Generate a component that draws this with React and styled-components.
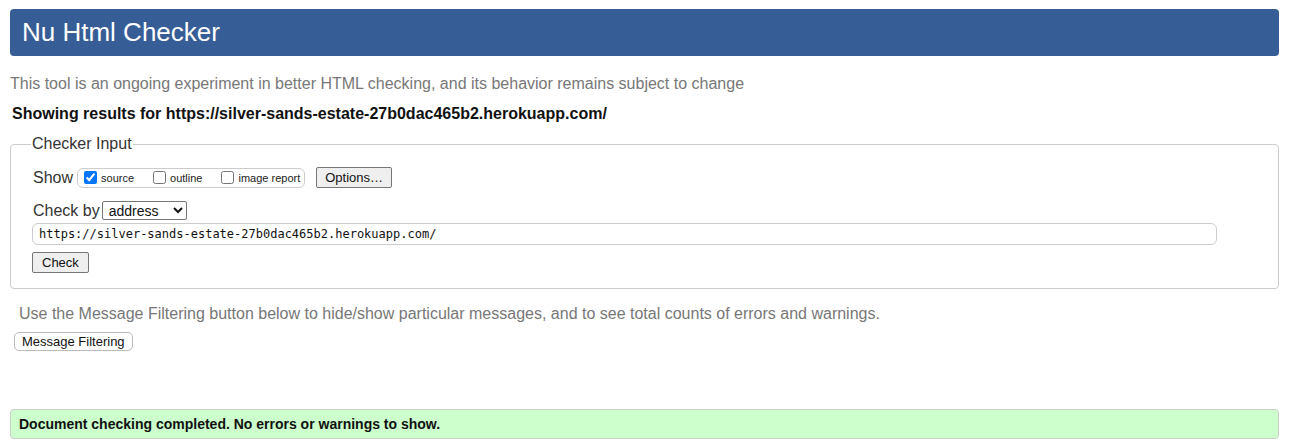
import React from "react";
import styled, { createGlobalStyle } from "styled-components";

const GlobalStyle = createGlobalStyle`
  body {
    margin: 0;
    background: #fff;
    font-family: Arial, "Liberation Sans", sans-serif;
    color: #222;
  }
`;

const Page = styled.div`
  padding: 9px 10px 0;
`;

const Header = styled.h1`
  margin: 0;
  height: 47px;
  background: #365d95;
  border-radius: 4px;
  color: #fff;
  font-weight: normal;
  font-size: 26px;
  line-height: 47px;
  padding-left: 12px;
`;

const Intro = styled.p`
  margin: 19px 0 0;
  font-size: 16px;
  line-height: 18px;
  color: #777;
`;

const Results = styled.p`
  margin: 12px 0 0 2px;
  font-size: 16px;
  line-height: 18px;
  font-weight: bold;
  color: #111;
`;

const Fieldset = styled.fieldset`
  margin: 12px 0 0;
  padding: 14px 22px 15px;
  border: 1px solid #ccc;
  border-radius: 4px;
  legend {
    font-size: 16px;
    padding: 0 1px;
    margin-left: -2px;
    color: #333;
  }
`;

const Row = styled.div`
  display: flex;
  align-items: center;
  font-size: 16px;
  color: #333;
  margin-top: ${(p) => p.top || 0}px;
`;

const Group = styled.span`
  display: inline-flex;
  align-items: center;
  height: 18px;
  border: 1px solid #ccc;
  border-radius: 6px;
  padding: 0 4px 0 6px;
  margin-left: 4px;
`;

const CheckLabel = styled.label`
  display: inline-flex;
  align-items: center;
  font-size: 11px;
  color: #222;
  margin-right: ${(p) => p.gap || 0}px;
  input {
    margin: 0 4px 0 0;
    width: 13px;
    height: 13px;
  }
`;

const Button = styled.button`
  font-family: Arial, "Liberation Sans", sans-serif;
  font-size: 13px;
  color: #111;
  background: #efefef;
  border: 1px solid #767676;
  border-radius: 2px;
  padding: 0 ${(p) => p.px || 8}px;
  height: 21px;
  margin-left: ${(p) => p.ml || 0}px;
  margin-top: ${(p) => p.mt || 0}px;
`;

const Select = styled.select`
  font-family: Arial, "Liberation Sans", sans-serif;
  font-size: 14px;
  height: 19px;
  width: 85px;
  margin-left: 2px;
  border: 1px solid #767676;
  border-radius: 2px;
  background: #fff;
  color: #111;
  padding: 0 2px;
`;

const UrlInput = styled.input`
  display: block;
  box-sizing: border-box;
  width: 1185px;
  height: 22px;
  margin: 3px 0 0 -1px;
  padding: 0 6px;
  border: 1px solid #ccc;
  border-radius: 6px;
  font-family: "DejaVu Sans Mono", "Liberation Mono", monospace;
  font-size: 12px;
  color: #111;
`;

const Note = styled.p`
  margin: 16px 0 0 9px;
  font-size: 16px;
  line-height: 18px;
  color: #777;
`;

const FilterButton = styled.button`
  display: block;
  margin: 9px 0 0 4px;
  height: 19px;
  padding: 0 7px;
  font-family: Arial, "Liberation Sans", sans-serif;
  font-size: 13px;
  color: #111;
  background: #fff;
  border: 1px solid #bbb;
  border-radius: 5px;
`;

const Success = styled.div`
  margin-top: 58px;
  height: 30px;
  box-sizing: border-box;
  display: flex;
  align-items: center;
  padding-left: 8px;
  background: #ccffcc;
  border: 1px solid #ccc;
  border-radius: 4px;
  font-size: 14px;
  font-weight: bold;
  color: #111;
`;

export default function App() {
  return (
    <Page>
      <GlobalStyle />
      <Header>Nu Html Checker</Header>
      <Intro>
        This tool is an ongoing experiment in better HTML checking, and its
        behavior remains subject to change
      </Intro>
      <Results>
        Showing results for https://silver-sands-estate-27b0dac465b2.herokuapp.com/
      </Results>
      <Fieldset>
        <legend>Checker Input</legend>
        <Row>
          Show
          <Group>
            <CheckLabel gap={19}>
              <input type="checkbox" defaultChecked />
              source
            </CheckLabel>
            <CheckLabel gap={19}>
              <input type="checkbox" />
              outline
            </CheckLabel>
            <CheckLabel>
              <input type="checkbox" />
              image report
            </CheckLabel>
          </Group>
          <Button ml={11} px={8}>
            Options…
          </Button>
        </Row>
        <Row top={13}>
          Check by
          <Select defaultValue="address">
            <option value="address">address</option>
            <option value="file">file upload</option>
            <option value="text">text input</option>
          </Select>
        </Row>
        <UrlInput
          type="text"
          defaultValue="https://silver-sands-estate-27b0dac465b2.herokuapp.com/"
        />
        <Button mt={7} ml={-1} px={9}>
          Check
        </Button>
      </Fieldset>
      <Note>
        Use the Message Filtering button below to hide/show particular messages,
        and to see total counts of errors and warnings.
      </Note>
      <FilterButton>Message Filtering</FilterButton>
      <Success>Document checking completed. No errors or warnings to show.</Success>
    </Page>
  );
}
